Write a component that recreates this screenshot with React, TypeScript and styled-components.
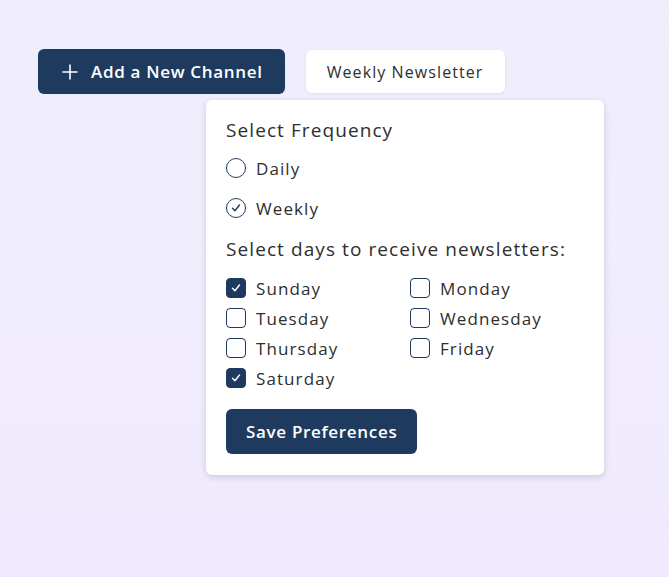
import React, { useState } from "react";
import styled, { createGlobalStyle } from "styled-components";

const Global = createGlobalStyle`
  html, body { margin: 0; padding: 0; }
  body {
    font-family: "Open Sans", "Noto Sans", sans-serif;
    letter-spacing: 0.068em;
    background: linear-gradient(180deg, #efeefc 0%, #f0ecfd 60%, #f1e9fd 100%);
    min-height: 577px;
    color: #2e2e2e;
  }
`;

const Page = styled.div`
  padding: 49px 38px;
`;

const Toolbar = styled.div`
  display: flex;
  align-items: center;
  gap: 21px;
`;

const PrimaryButton = styled.button<{ $wide?: boolean }>`
  display: inline-flex;
  align-items: center;
  gap: 13px;
  height: 45px;
  padding: 0 ${(p) => (p.$wide ? 22 : 20)}px 0 ${(p) => (p.$wide ? 24 : 20)}px;
  background: #1f3a5f;
  color: #fff;
  border: none;
  border-radius: 6px;
  font-family: inherit;
  letter-spacing: 0.04em;
  font-size: 17px;
  font-weight: 600;
  cursor: pointer;
`;

const SecondaryButton = styled.button`
  height: 43px;
  padding: 0 21px;
  background: #fff;
  color: #2e2e2e;
  border: none;
  border-radius: 6px;
  font-family: inherit;
  letter-spacing: inherit;
  font-size: 16px;
  box-shadow: 0 1px 3px rgba(30, 40, 80, 0.08);
  cursor: pointer;
`;

const DropdownWrap = styled.div`
  margin-left: 168px;
  margin-top: 6px;
`;

const Panel = styled.div`
  width: 398px;
  box-sizing: border-box;
  background: #fff;
  border-radius: 6px;
  padding: 19px 20px 21px;
  box-shadow: 0 2px 6px rgba(20, 20, 60, 0.16);
`;

const Heading = styled.div<{ $mt?: number }>`
  font-size: 19px;
  line-height: 22px;
  margin-top: ${(p) => p.$mt ?? 0}px;
`;

const RadioList = styled.div`
  display: flex;
  flex-direction: column;
  gap: 10px;
  margin-top: 12px;
`;

const OptionRow = styled.label`
  display: flex;
  align-items: center;
  gap: 10px;
  height: 30px;
  font-size: 17px;
  cursor: pointer;
`;

const RadioCircle = styled.span`
  width: 20px;
  height: 20px;
  box-sizing: border-box;
  border: 1.5px solid #1f3a5f;
  border-radius: 50%;
  display: inline-flex;
  align-items: center;
  justify-content: center;
  flex-shrink: 0;
`;

const DayGrid = styled.div`
  display: grid;
  grid-template-columns: 184px 1fr;
  margin-top: 13px;
`;

const CheckBox = styled.span<{ $checked: boolean }>`
  width: 20px;
  height: 20px;
  box-sizing: border-box;
  border: 1.5px solid #1f3a5f;
  border-radius: 4px;
  background: ${(p) => (p.$checked ? "#1f3a5f" : "#fff")};
  display: inline-flex;
  align-items: center;
  justify-content: center;
  flex-shrink: 0;
`;

const Footer = styled.div`
  margin-top: 16px;
`;

const Check = ({ color }: { color: string }) => (
  <svg width="12" height="12" viewBox="0 0 12 12" fill="none">
    <path d="M2.5 6.3 L4.9 8.8 L9.5 3" stroke={color} strokeWidth="1.4" strokeLinecap="round" strokeLinejoin="round" />
  </svg>
);

const Plus = () => (
  <svg width="16" height="16" viewBox="0 0 16 16" fill="none">
    <path d="M8 1 V15 M1 8 H15" stroke="#fff" strokeWidth="1.6" strokeLinecap="round" />
  </svg>
);

const days = ["Sunday", "Monday", "Tuesday", "Wednesday", "Thursday", "Friday", "Saturday"];

export default function App() {
  const [freq, setFreq] = useState("Weekly");
  const [sel, setSel] = useState<Record<string, boolean>>({ Sunday: true, Saturday: true });
  return (
    <>
      <Global />
      <Page>
        <Toolbar>
          <PrimaryButton $wide>
            <Plus />
            Add a New Channel
          </PrimaryButton>
          <SecondaryButton>Weekly Newsletter</SecondaryButton>
        </Toolbar>
        <DropdownWrap>
          <Panel>
            <Heading>Select Frequency</Heading>
            <RadioList>
              {["Daily", "Weekly"].map((f) => (
                <OptionRow key={f} onClick={() => setFreq(f)}>
                  <RadioCircle>{freq === f && <Check color="#1f3a5f" />}</RadioCircle>
                  {f}
                </OptionRow>
              ))}
            </RadioList>
            <Heading $mt={15}>Select days to receive newsletters:</Heading>
            <DayGrid>
              {days.map((d) => (
                <OptionRow key={d} onClick={() => setSel({ ...sel, [d]: !sel[d] })}>
                  <CheckBox $checked={!!sel[d]}>{sel[d] && <Check color="#fff" />}</CheckBox>
                  {d}
                </OptionRow>
              ))}
            </DayGrid>
            <Footer>
              <PrimaryButton>Save Preferences</PrimaryButton>
            </Footer>
          </Panel>
        </DropdownWrap>
      </Page>
    </>
  );
}
